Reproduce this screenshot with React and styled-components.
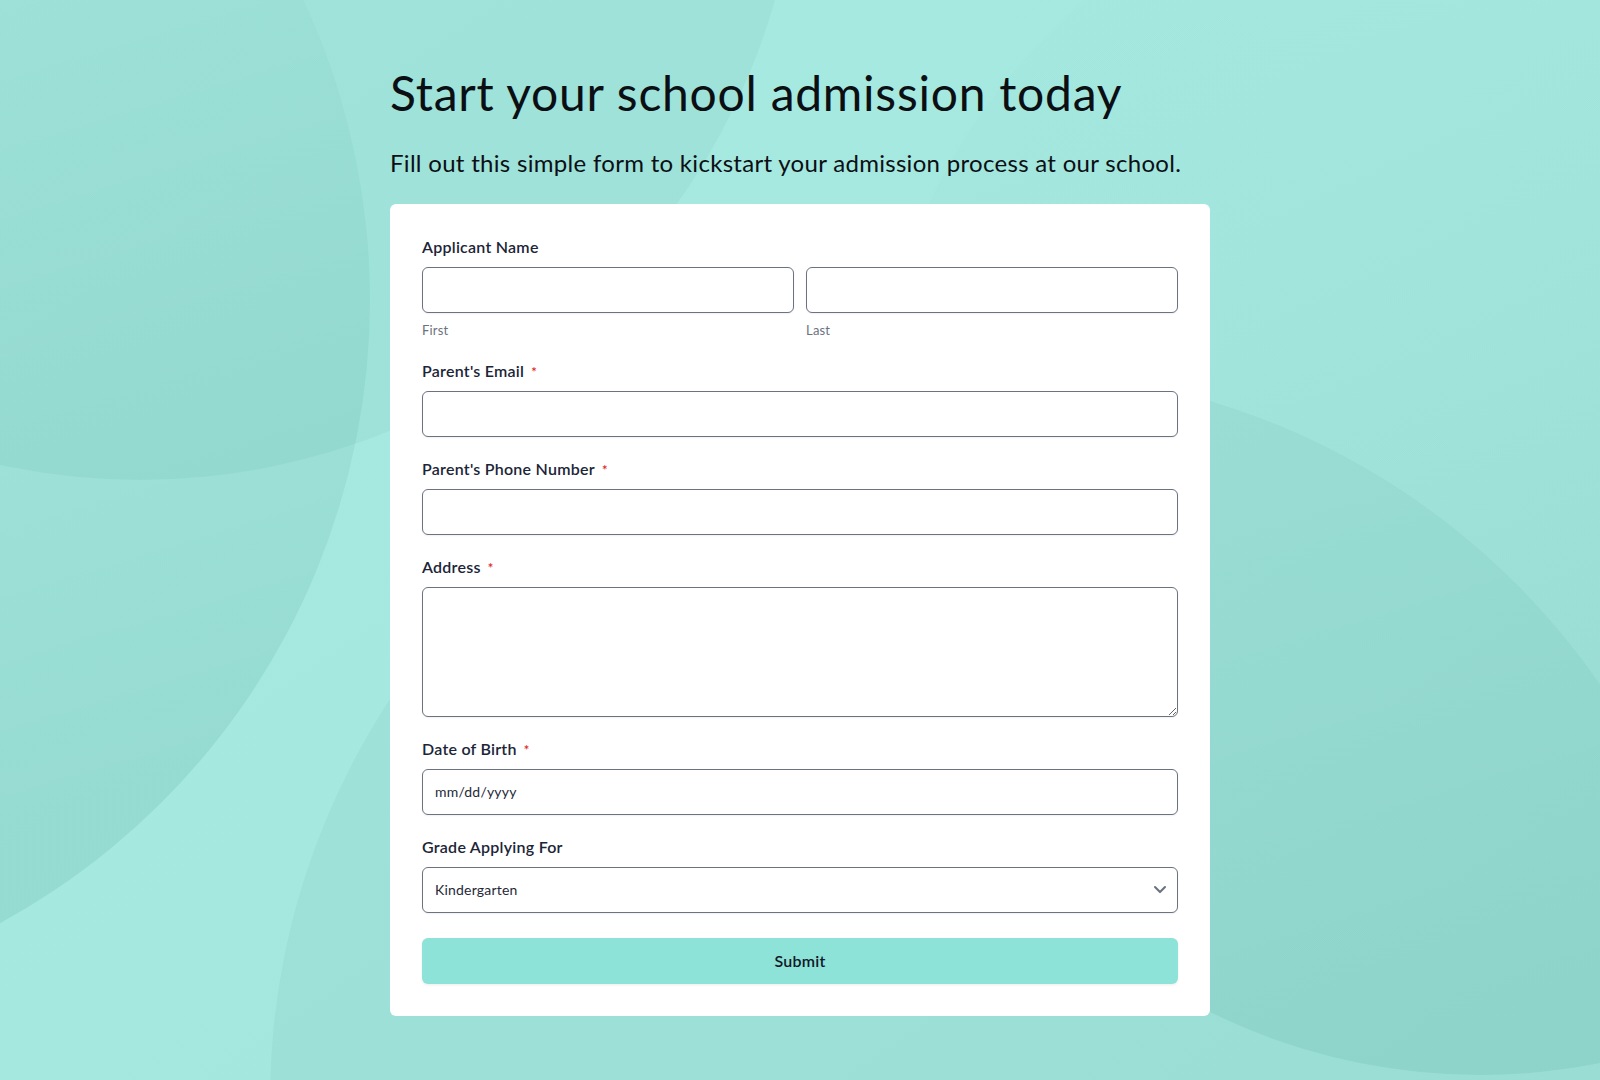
import React from 'react';
import styled, { createGlobalStyle } from 'styled-components';
import { ChevronDown } from 'lucide-react';

// decorative blobs behind the form, drawn once as an svg background
const blobs = `
<svg xmlns="http://www.w3.org/2000/svg" width="1600" height="1080" viewBox="0 0 1600 1080">
  <defs>
    <linearGradient id="base" x1="0" y1="0" x2="1" y2="1">
      <stop offset="0" stop-color="#a7eae1"/>
      <stop offset="0.5" stop-color="#a5e8df"/>
      <stop offset="1" stop-color="#a0e3da"/>
    </linearGradient>
    <linearGradient id="fadeB" x1="0" y1="0" x2="0.3" y2="1">
      <stop offset="0" stop-color="#00574e" stop-opacity="0"/>
      <stop offset="0.45" stop-color="#00574e" stop-opacity="0.012"/>
      <stop offset="1" stop-color="#00574e" stop-opacity="0.09"/>
    </linearGradient>
    <linearGradient id="fadeD" x1="0" y1="0" x2="0.3" y2="1">
      <stop offset="0" stop-color="#00574e" stop-opacity="0"/>
      <stop offset="0.5" stop-color="#00574e" stop-opacity="0.025"/>
      <stop offset="1" stop-color="#00574e" stop-opacity="0.07"/>
    </linearGradient>
  </defs>
  <rect width="1600" height="1080" fill="url(#base)"/>
  <circle cx="140" cy="-180" r="660" fill="#00574e" fill-opacity="0.045"/>
  <circle cx="-340" cy="300" r="710" fill="url(#fadeB)"/>
  <circle cx="1000" cy="1100" r="730" fill="#00574e" fill-opacity="0.04"/>
  <circle cx="1480" cy="465" r="610" fill="url(#fadeD)"/>
</svg>`;

const GlobalStyle = createGlobalStyle`
  * { box-sizing: border-box; }
  body {
    margin: 0;
    font-family: Lato, "Open Sans", sans-serif;
    color: #111827;
  }
`;

const Page = styled.div`
  min-height: 100vh;
  overflow: hidden;
  padding: 64px 0 40px;
  background: #a5e8df url("data:image/svg+xml,${encodeURIComponent(blobs)}") 0 0 / 1600px 1080px no-repeat;
`;

const Wrap = styled.div`
  width: 820px;
  margin: 0 auto;
`;

const Title = styled.h1`
  margin: 0;
  font-size: 48px;
  line-height: 1.2;
  font-weight: 400;
  color: #0b0f14;
  letter-spacing: 0.75px;
`;

const Lead = styled.p`
  margin: 23px 0 23px;
  font-size: 24px;
  line-height: 36px;
  color: #0b0f14;
  letter-spacing: 0.3px;
`;

const Card = styled.form`
  background: #fff;
  border-radius: 6px;
  padding: 31px 32px 32px;
  display: flex;
  flex-direction: column;
  gap: 20px;
`;

const Field = styled.div`
  display: flex;
  flex-direction: column;
`;

const Label = styled.label`
  font-size: 16px;
  line-height: 24px;
  font-weight: 600;
  color: #1b2537;
  letter-spacing: 0.25px;
  margin-bottom: 8px;
`;

const Req = styled.span`
  color: #dc2626;
  font-size: 13px;
  line-height: 1;
  margin-left: 7px;
`;

const Pair = styled.div`
  display: grid;
  grid-template-columns: 1fr 1fr;
  gap: 12px;
`;

const Sub = styled.span`
  display: block;
  margin-top: 9px;
  font-size: 13px;
  line-height: 17px;
  letter-spacing: 0.2px;
  color: #6b7280;
`;

const Input = styled.input`
  width: 100%;
  height: 46px;
  padding: 0 12px;
  border: 1px solid #6b7280;
  border-radius: 6px;
  background: #fff;
  box-shadow: 0 1px 2px rgba(0, 0, 0, 0.06);
  font: 14px Lato, sans-serif;
  letter-spacing: 0.2px;
  color: #1f2937;
  outline: none;
  &::placeholder { color: #1f2937; }
`;

const Area = styled.textarea`
  width: 100%;
  height: 130px;
  padding: 10px 12px;
  border: 1px solid #6b7280;
  border-radius: 6px;
  box-shadow: 0 1px 2px rgba(0, 0, 0, 0.06);
  font: 14px Lato, sans-serif;
  outline: none;
  display: block;
`;

const SelectBox = styled.div`
  position: relative;
  svg {
    position: absolute;
    right: 8px;
    top: 50%;
    transform: translateY(-52%);
    color: #6b7280;
    pointer-events: none;
  }
`;

const Select = styled.select`
  width: 100%;
  height: 46px;
  padding: 0 12px;
  appearance: none;
  border: 1px solid #6b7280;
  border-radius: 6px;
  background: #fff;
  box-shadow: 0 1px 2px rgba(0, 0, 0, 0.06);
  font: 14px Lato, sans-serif;
  letter-spacing: 0.2px;
  color: #1f2937;
  outline: none;
`;

const Submit = styled.button`
  margin-top: 5px;
  height: 46px;
  border: none;
  border-radius: 6px;
  background: #8de3d8;
  box-shadow: 0 1px 3px rgba(0, 0, 0, 0.08);
  font: 600 16px Lato, sans-serif;
  letter-spacing: 0.2px;
  color: #111827;
  cursor: pointer;
`;

const fields = [
  { label: "Parent's Email", type: 'email' },
  { label: "Parent's Phone Number", type: 'tel' },
];

export default function App() {
  return (
    <Page>
      <GlobalStyle />
      <Wrap>
        <Title>Start your school admission today</Title>
        <Lead>Fill out this simple form to kickstart your admission process at our school.</Lead>
        <Card onSubmit={e => e.preventDefault()}>
          <Field>
            <Label>Applicant Name</Label>
            <Pair>
              <div>
                <Input type="text" />
                <Sub>First</Sub>
              </div>
              <div>
                <Input type="text" />
                <Sub>Last</Sub>
              </div>
            </Pair>
          </Field>
          {fields.map(f => (
            <Field key={f.label}>
              <Label>{f.label}<Req>*</Req></Label>
              <Input type={f.type} />
            </Field>
          ))}
          <Field>
            <Label>Address<Req>*</Req></Label>
            <Area />
          </Field>
          <Field>
            <Label>Date of Birth<Req>*</Req></Label>
            <Input type="text" placeholder="mm/dd/yyyy" />
          </Field>
          <Field>
            <Label>Grade Applying For</Label>
            <SelectBox>
              <Select defaultValue="Kindergarten">
                <option>Kindergarten</option>
                <option>Grade 1</option>
                <option>Grade 2</option>
                <option>Grade 3</option>
              </Select>
              <ChevronDown size={20} strokeWidth={2.5} />
            </SelectBox>
          </Field>
          <Submit type="submit">Submit</Submit>
        </Card>
      </Wrap>
    </Page>
  );
}
